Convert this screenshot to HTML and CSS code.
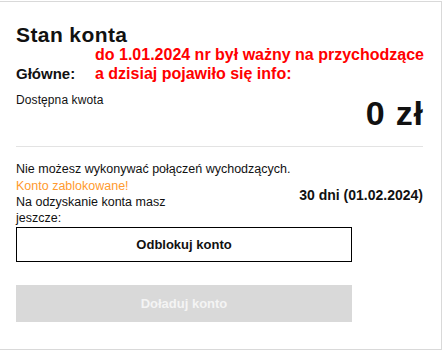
FILE: index.html
```html
<!DOCTYPE html>
<html lang="pl">
<head>
<meta charset="utf-8">
<link rel="stylesheet" href="styles.css">
</head>
<body>
<div class="card">
  <h1 class="title">Stan konta</h1>
  <div class="main-row">
    <span class="label">Główne:</span>
    <span class="note">do 1.01.2024 nr był ważny na przychodzące<br>a dzisiaj pojawiło się info:</span>
  </div>
  <div class="balance">
    <div class="balance-label">Dostępna kwota</div>
    <div class="balance-value">0 zł</div>
  </div>
  <hr class="divider">
  <p class="info">Nie możesz wykonywać połączeń wychodzących.</p>
  <div class="status-row">
    <div class="status-left">
      <div class="blocked">Konto zablokowane!</div>
      <div class="recover">Na odzyskanie konta masz jeszcze:</div>
    </div>
    <div class="days">30 dni (01.02.2024)</div>
  </div>
  <button class="btn btn-outline">Odblokuj konto</button>
  <button class="btn btn-disabled">Doładuj konto</button>
</div>
</body>
</html>
```

FILE: styles.css
```css
* { box-sizing: border-box; }
html, body { margin: 0; padding: 0; background: #fff; }
body {
  font-family: "Liberation Sans", Arial, sans-serif;
  color: #111;
  width: 448px;
  height: 357px;
  overflow: hidden;
}
.card {
  margin: 1px 0 0 -1px;
  width: 443px;
  height: 349px;
  border: 1px solid #d9d9d9;
  padding: 21px 18px 0 16px;
}
.title {
  margin: 0;
  font-size: 21px;
  line-height: 24px;
  font-weight: bold;
  letter-spacing: 0.4px;
}
.main-row {
  display: flex;
  align-items: flex-end;
  margin-top: -2px;
}
.label {
  flex: none;
  font-size: 15px;
  font-weight: bold;
  line-height: 19px;
  width: 79px;
}
.note {
  flex: none;
  white-space: nowrap;
  color: #ff0000;
  font-size: 16px;
  font-weight: bold;
  line-height: 19px;
}
.balance {
  display: flex;
  justify-content: space-between;
  align-items: flex-start;
  margin-top: 9px;
}
.balance-label {
  font-size: 12px;
  line-height: 16px;
  letter-spacing: 0.1px;
}
.balance-value {
  font-size: 34px;
  font-weight: bold;
  line-height: 34px;
  margin-top: 4px;
  letter-spacing: 0.8px;
  margin-right: -0.8px;
}
.divider {
  border: 0;
  border-top: 1px solid #e3e3e3;
  margin: 16px 0 0 0;
}
.info {
  margin: 14px 0 1px 0;
  font-size: 12.5px;
  line-height: 16px;
}
.status-row {
  display: flex;
  justify-content: space-between;
  align-items: center;
}
.status-left {
  width: 170px;
  font-size: 12.5px;
  line-height: 16px;
}
.blocked { color: #ff9a2e; }
.days {
  font-size: 14px;
  font-weight: bold;
  margin-top: -14px;
}
.btn {
  display: block;
  width: 336px;
  font-family: inherit;
  font-size: 13px;
  font-weight: bold;
}
.btn-outline {
  margin-top: 1px;
  height: 35px;
  background: #fff;
  border: 1px solid #000;
  color: #111;
}
.btn-disabled {
  margin-top: 23px;
  height: 37px;
  background: #d9d9d9;
  border: 0;
  color: #f4f4f4;
}
```
